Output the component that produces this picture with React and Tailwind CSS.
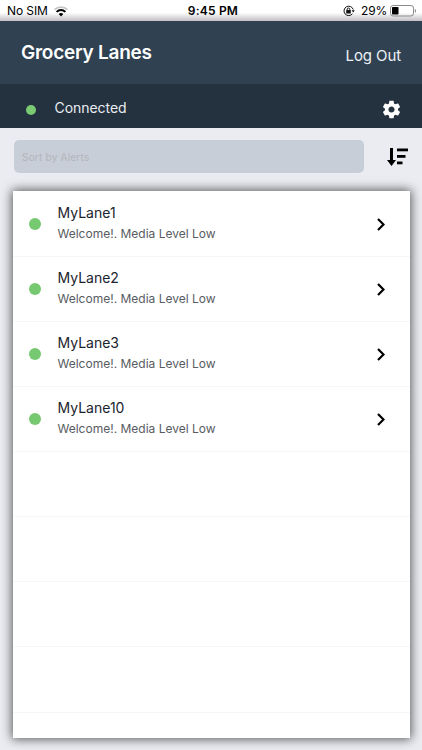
import React, { useState } from "react";

const LANES = [
  { id: 1, name: "MyLane1", message: "Welcome!. Media Level Low" },
  { id: 2, name: "MyLane2", message: "Welcome!. Media Level Low" },
  { id: 3, name: "MyLane3", message: "Welcome!. Media Level Low" },
  { id: 4, name: "MyLane10", message: "Welcome!. Media Level Low" },
];

const EMPTY_ROWS = 5;

function WifiIcon() {
  return (
    <svg className="w-[14px] h-[11px]" viewBox="0 0 14 11" fill="none">
      <path d="M0.6 3.7A9.4 9.4 0 0 1 13.4 3.7" stroke="#c4c4c4" strokeWidth="1.8" />
      <path d="M2.6 5.9A6.3 6.3 0 0 1 11.4 5.9" stroke="#000" strokeWidth="2" />
      <path d="M4.7 8A3.3 3.3 0 0 1 9.3 8L7 10.4Z" fill="#000" />
    </svg>
  );
}

function RotationLockIcon() {
  return (
    <svg className="w-[12px] h-[12px]" viewBox="0 0 12 12" fill="none">
      <path
        d="M9.4 8.8A4.7 4.7 0 1 1 10.2 4.5"
        stroke="#111"
        strokeWidth="1"
      />
      <path d="M8.6 5.3h3.2L10.2 7.5Z" fill="#111" />
      <rect x="3.2" y="5" width="4.6" height="3.6" rx="0.4" fill="#111" />
      <path d="M4.2 5.4V4.3a1.3 1.3 0 0 1 2.6 0v1.1" stroke="#111" />
    </svg>
  );
}

function BatteryIcon() {
  return (
    <svg className="w-[27px] h-[12px]" viewBox="0 0 27 12" fill="none">
      <rect x="0.5" y="0.5" width="23" height="10.5" rx="2.6" stroke="#8c8c8c" />
      <rect x="2" y="2" width="6.5" height="7.5" rx="0.8" fill="#000" />
      <path d="M24.8 4v3.8c.8-.3 1.2-1 1.2-1.9s-.4-1.6-1.2-1.9Z" fill="#8c8c8c" />
    </svg>
  );
}

function GearIcon() {
  return (
    <svg className="w-[21px] h-[21px]" viewBox="0 0 24 24" fill="#fff">
      <path d="M19.43 12.98c.04-.32.07-.64.07-.98s-.03-.66-.07-.98l2.11-1.65c.19-.15.24-.42.12-.64l-2-3.46c-.12-.22-.39-.3-.61-.22l-2.49 1c-.52-.4-1.08-.73-1.69-.98l-.38-2.65C14.46 2.18 14.25 2 14 2h-4c-.25 0-.46.18-.49.42l-.38 2.65c-.61.25-1.17.59-1.69.98l-2.49-1c-.23-.09-.49 0-.61.22l-2 3.46c-.13.22-.07.49.12.64l2.11 1.65c-.04.32-.07.65-.07.98s.03.66.07.98l-2.11 1.65c-.19.15-.24.42-.12.64l2 3.46c.12.22.39.3.61.22l2.49-1c.52.4 1.08.73 1.69.98l.38 2.65c.03.24.24.42.49.42h4c.25 0 .46-.18.49-.42l.38-2.65c.61-.25 1.17-.59 1.69-.98l2.49 1c.23.09.49 0 .61-.22l2-3.46c.12-.22.07-.49-.12-.64l-2.11-1.65zM12 15.5c-1.93 0-3.5-1.57-3.5-3.5s1.57-3.5 3.5-3.5 3.5 1.57 3.5 3.5-1.57 3.5-3.5 3.5z" />
    </svg>
  );
}

function SortIcon() {
  return (
    <svg className="w-[21px] h-[18px]" viewBox="0 0 21 18" fill="#000">
      <path d="M3 0h3v12h3L4.5 18 0 12h3Z" />
      <rect x="10" y="0.5" width="11" height="2.8" />
      <rect x="10" y="7" width="8.5" height="2.8" />
      <rect x="10" y="13.5" width="5.5" height="2.8" />
    </svg>
  );
}

function ChevronIcon() {
  return (
    <svg className="mt-px w-[8px] h-[13px]" viewBox="0 0 8 13" fill="none">
      <path d="M1 1l5.5 5.5L1 12" stroke="#000" strokeWidth="2.2" />
    </svg>
  );
}

function StatusBar() {
  return (
    <div className="grid grid-cols-3 items-center h-[21px] pl-[7px] pr-[5px] text-[12px] leading-[22px] text-black bg-linear-to-b from-white from-60% to-[#c3bfc5]">
      <div className="flex items-center gap-[6px]">
        <span className="-tracking-[0.1px]">No SIM</span>
        <WifiIcon />
      </div>
      <span className="pl-[2px] text-center font-semibold tracking-[0.2px]">
        9:45 PM
      </span>
      <div className="flex items-center justify-end">
        <RotationLockIcon />
        <span className="ml-[6px] mr-[3px] -tracking-[0.2px]">29%</span>
        <BatteryIcon />
      </div>
    </div>
  );
}

function LaneRow({ lane }) {
  return (
    <li className="flex items-center h-[65.15px] pl-[16px] pr-[25px] border-b border-[#f6f6f7]">
      <span className="mt-px size-[12px] rounded-full bg-[#76c970]" />
      <div className="flex-1 ml-[17px] -mt-[1.5px]">
        <p className="text-[14px] leading-[21px] text-[#1c242d]">{lane.name}</p>
        <p className="text-[12px] leading-[21px] text-[#585c62]">
          {lane.message}
        </p>
      </div>
      <ChevronIcon />
    </li>
  );
}

export default function App() {
  const [filter, setFilter] = useState("");

  return (
    <div className="flex flex-col w-full h-screen overflow-hidden bg-[#ebecf1] font-['Inter','Liberation_Sans',sans-serif]">
      <StatusBar />
      <header className="flex items-center justify-between h-[63px] px-[21px] bg-[#304152] text-white">
        <h1 className="mt-[2px] text-[19px] font-semibold -tracking-[0.25px]">
          Grocery Lanes
        </h1>
        <button className="mt-[7px] text-[15px] -tracking-[0.1px] text-[#edf1f5]">
          Log Out
        </button>
      </header>
      <div className="flex items-center h-[44px] pl-[26px] pr-[20px] bg-[#24313f]">
        <span className="mt-[7px] size-[10px] rounded-full bg-[#7aca72]" />
        <span className="flex-1 ml-[18.5px] mt-[2px] text-[14px] -tracking-[0.05px] text-[#e9edf1]">
          Connected
        </span>
        <button className="mt-[6px]">
          <GearIcon />
        </button>
      </div>

      <div className="flex items-center mt-[12px] pl-[14px] pr-[14px]">
        <input
          className="w-[350px] h-[33px] px-[8px] rounded-[5px] bg-[#c7ced8] text-[10px] tracking-[0.22px] placeholder:text-[#b2b5ba] outline-none"
          placeholder="Sort by Alerts"
          value={filter}
          onChange={(e) => setFilter(e.target.value)}
        />
        <button className="ml-auto">
          <SortIcon />
        </button>
      </div>

      <ul className="mt-[18px] ml-[12.5px] mr-[12.5px] pt-[0.5px] h-[547px] overflow-hidden bg-white shadow-[0_0_10px_1px_rgba(0,0,0,0.65)]">
        {LANES.map((lane) => (
          <LaneRow key={lane.id} lane={lane} />
        ))}
        {Array.from({ length: EMPTY_ROWS }).map((_, i) => (
          <li key={i} className="h-[65.15px] border-b border-[#f6f6f7]" />
        ))}
      </ul>
    </div>
  );
}
